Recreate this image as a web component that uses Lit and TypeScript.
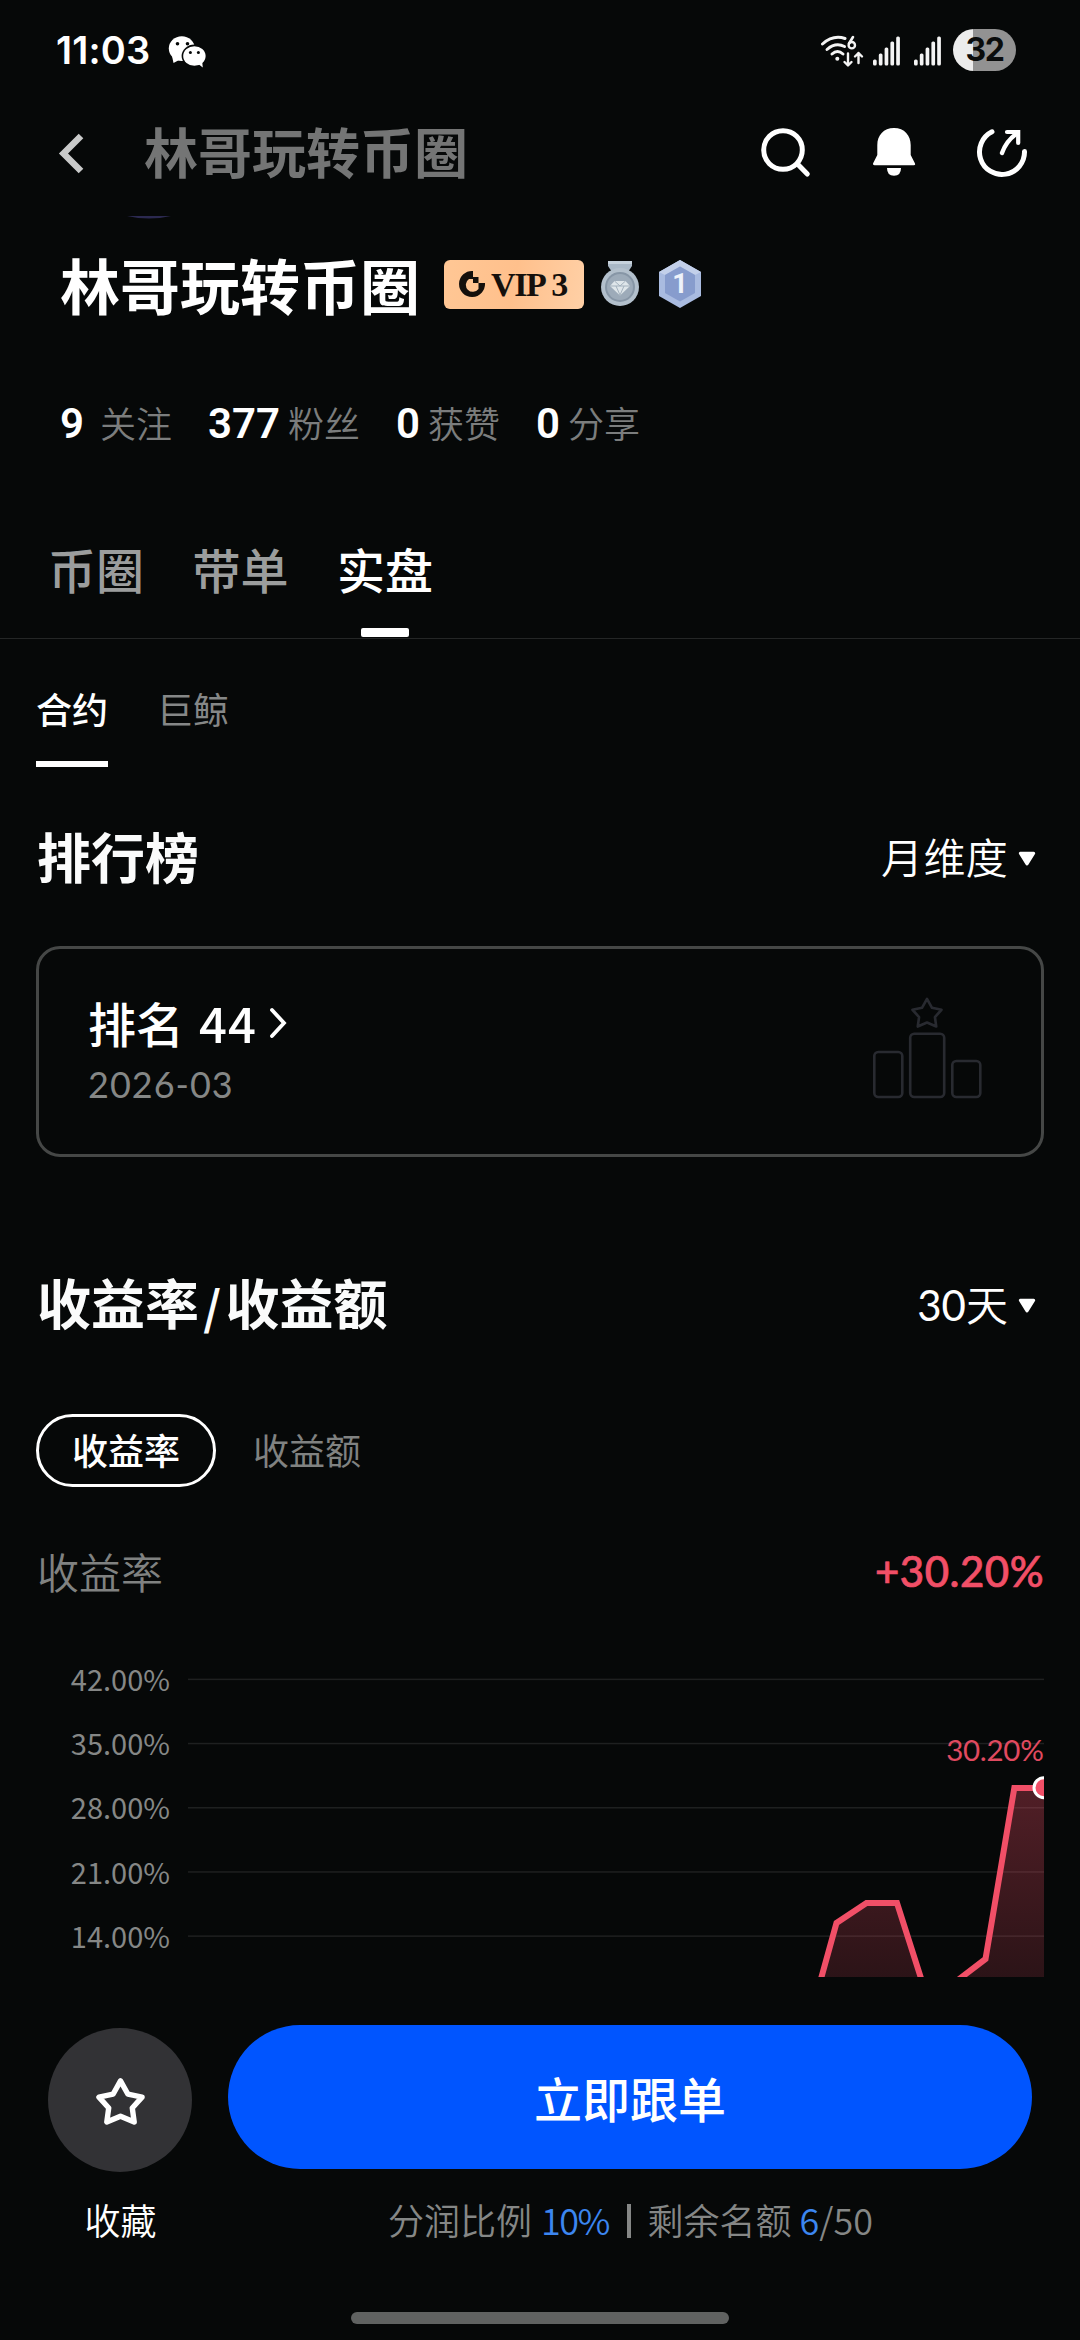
import { LitElement, html, svg, css } from "lit";
import { customElement } from "lit/decorators.js";

const starPath = "M25 5 L32.6 18.6 L47 21.6 L37 32.6 L39 47 L25 41 L11 47 L13 32.6 L3 21.6 L17.4 18.6 Z";

const signal = () => html`
  <svg class="signal" viewBox="0 0 28 30">
    ${[6, 12, 18, 24, 29].map(
      (h, i) => svg`<rect x=${i * 5.8} y=${29.5 - h} width="3.7" height=${h} rx="1.5" fill="#f4f4f4"></rect>`
    )}
  </svg>
`;

const caret = () => html`
  <svg class="caret" viewBox="0 0 18 16">
    <path d="M2.3 2.2 H15.7 L9 13 Z" fill="#fff" stroke="#fff" stroke-width="3" stroke-linejoin="round" />
  </svg>
`;

@customElement("status-bar")
class StatusBar extends LitElement {
  static styles = css`
    :host { display: flex; align-items: center; height: 100px; padding: 0 64px 0 56px; box-sizing: border-box; }
    .time { font: 600 38px/44px Inter, "Noto Sans CJK SC", sans-serif; color: #fff; letter-spacing: 0.2px; width: 112px; }
    .wechat { width: 38px; height: 34px; margin-top: 3px; }
    .right { margin-left: auto; display: flex; align-items: center; }
    .wifi { width: 44px; height: 34px; margin-right: 9px; margin-top: 3px; }
    .signal { width: 28px; height: 30px; margin-right: 13px; margin-top: 2px; }
    .battery {
      width: 63px; height: 42px; border-radius: 21px; margin-left: -2px;
      background: linear-gradient(90deg, #ececec 20px, #929292 20px);
      font: 700 32px/42px Inter, "Noto Sans CJK SC", sans-serif; color: #0a0c0c; text-align: center; letter-spacing: -1.5px;
    }
  `;
  render() {
    return html`
      <div class="time">11:03</div>
      <svg class="wechat" viewBox="168 35 38 34">
        <ellipse cx="181.8" cy="48.6" rx="13" ry="12.4" fill="#fff" />
        <path d="M172 56 L173.5 63 L181 59 Z" fill="#fff" />
        <ellipse cx="194.4" cy="56" rx="12.8" ry="11.4" fill="#060808" />
        <ellipse cx="194.4" cy="56" rx="11.2" ry="9.8" fill="#fff" />
        <path d="M197 63 L202.8 67.5 L202 60 Z" fill="#fff" />
        <circle cx="177.5" cy="43.8" r="1.8" fill="#060808" /><circle cx="187.5" cy="43.8" r="1.8" fill="#060808" />
        <circle cx="190.4" cy="52.4" r="1.5" fill="#060808" /><circle cx="198.4" cy="52.4" r="1.5" fill="#060808" />
      </svg>
      <div class="right">
        <svg class="wifi" viewBox="819 35 44 34" fill="none" stroke="#f4f4f4" stroke-linecap="round">
          <path d="M821.5 44 Q832 34.5 844 38.5" stroke-width="3" />
          <path d="M826 49.5 Q834.5 42 843.5 46.5" stroke-width="3" />
          <path d="M831 54 Q836.5 49 842 54" stroke-width="3" />
          <circle cx="836.3" cy="58.7" r="2" fill="#f4f4f4" stroke="none" />
          <circle cx="850.8" cy="45.2" r="3.2" stroke-width="2.4" />
          <path d="M852 37 L848 43.5" stroke-width="2.6" />
          <path d="M847 53.5 V65 M843.5 62 L847 65.5 L850.5 62" stroke-width="2.4" stroke-linejoin="round" />
          <path d="M857.5 63 V53 M854 56.5 L857.5 53 L861 56.5" stroke-width="2.4" stroke-linejoin="round" />
        </svg>
        ${signal()}${signal()}
        <div class="battery">32</div>
      </div>
    `;
  }
}

@customElement("nav-header")
class NavHeader extends LitElement {
  static styles = css`
    :host { display: flex; align-items: center; height: 104px; padding: 0 50px 0 56px; box-sizing: border-box; }
    .back { width: 30px; height: 44px; margin-top: 3px; }
    .title { margin: -2px 0 0 58px; font: 700 54px/60px "Noto Sans CJK SC", sans-serif; color: #747575; }
    .actions { margin-left: auto; display: flex; gap: 52px; }
    .icon { width: 56px; height: 56px; }
  `;
  render() {
    return html`
      <svg class="back" viewBox="56 132 30 44" fill="none" stroke="#c9caca" stroke-width="6.5">
        <path d="M81 136 L63.5 153.5 L81 171" />
      </svg>
      <div class="title">林哥玩转币圈</div>
      <div class="actions">
        <svg class="icon" viewBox="758 124 56 56" fill="none" stroke="#fff" stroke-width="5" stroke-linecap="round">
          <circle cx="783" cy="150" r="19.3" /><path d="M797.5 164 L807.3 174" />
        </svg>
        <svg class="icon" viewBox="866 124 56 56" fill="#fff">
          <path d="M894 128 C883.5 128 877.3 135.5 877.3 145 V155 L873 163.5 Q872.6 165.3 874.5 165.3 H914 Q915.8 165.3 915 163.5 L910.7 155 V145 C910.7 135.5 904.5 128 894 128 Z" />
          <path d="M887 168 H901 Q901 175.8 894 175.8 Q887 175.8 887 168 Z" />
        </svg>
        <svg class="icon" viewBox="974 124 56 56" fill="none" stroke="#fff" stroke-width="5" stroke-linecap="round" stroke-linejoin="round">
          <path d="M992 131.8 A22.5 22.5 0 1 0 1024.5 151.5" />
          <path d="M1002 153 Q1006 141.500 1016 134" stroke-width="4.4" />
          <path d="M1007 132 H1018.2 V143" stroke-width="4.2" stroke-linejoin="miter" />
        </svg>
      </div>
    `;
  }
}

@customElement("profile-summary")
class ProfileSummary extends LitElement {
  static styles = css`
    :host { display: flex; flex-direction: column; font-family: "Noto Sans CJK SC", sans-serif; }
    .sliver { width: 44px; height: 3px; margin: 12px 0 35px 127px; }
    .name-row { display: flex; align-items: center; height: 60px; padding-left: 60px; }
    .name { font-size: 60px; line-height: 60px; font-weight: 700; color: #fff; margin-top: -1px; }
    .vip {
      display: flex; align-items: center; box-sizing: border-box; width: 140px; height: 49px; margin-left: 24px; padding-left: 14px;
      border-radius: 6px; background: linear-gradient(100deg, #ffc795, #ffc08c 50%, #ffd0a6);
      font: 700 34px/49px "Liberation Serif", serif; color: #15100c; letter-spacing: -1.4px;
    }
    .mark { width: 28px; height: 28px; margin-right: 5px; }
    .level { margin-left: 6px; }
    .medal { width: 40px; height: 48px; margin-left: 16px; }
    .hex { width: 44px; height: 50px; margin-left: 18px; }
    .stats { display: flex; align-items: center; gap: 36px; height: 48px; margin-top: 84px; padding-left: 60px; }
    .stat { display: flex; align-items: center; gap: 8px; }
    .wide { gap: 16px; }
    .count { font: 600 42px/48px Roboto, sans-serif; color: #fff; margin-top: 4px; }
    .label { font-size: 36px; line-height: 48px; font-weight: 350; color: #7b7d7d; }
  `;
  render() {
    const stats: [string, string][] = [["9", "关注"], ["377", "粉丝"], ["0", "获赞"], ["0", "分享"]];
    return html`
      <svg class="sliver" viewBox="0 0 44 3"><path d="M0 0 H44 Q22 5 0 0 Z" fill="#2b2950" /></svg>
      <div class="name-row">
        <div class="name">林哥玩转币圈</div>
        <div class="vip">
          <svg class="mark" viewBox="0 0 28 28">
            <path d="M15 1 A13 13 0 1 0 27 13 H20.500 V19 A7 7 0 1 1 11 9 H15 Z" fill="#15100c" />
            <path d="M15 7 H20.500 V13 H15 Z" fill="#15100c" />
          </svg>
          VIP<span class="level">3</span>
        </div>
        <svg class="medal" viewBox="0 0 40 48">
          <path d="M8 1 H32 V6 L28 12 H12 L8 6 Z" fill="#a9b8c6" />
          <path d="M8 1 H32 V4 H8 Z" fill="#c6d2dc" />
          <circle cx="20" cy="27" r="19" fill="#b3c0cc" />
          <circle cx="20" cy="27" r="15" fill="#8796a6" />
          <circle cx="20" cy="27" r="13" fill="#9dabb9" />
          <path d="M14.500 21 H25.500 L30 26 L20 35.500 L10 26 Z" fill="#dfe6ea" />
          <path d="M10 26 H30 M14.500 21 L20 26 L25.500 21 M16 26 L20 35 L24 26" stroke="#a3b1bd" stroke-width="1" fill="none" />
        </svg>
        <svg class="hex" viewBox="0 0 44 50">
          <path d="M22 1 L43 13 V37 L22 49 L1 37 V13 Z" fill="#a9bbe0" />
          <path d="M22 1 L43 13 L37 16 L22 7.500 L7 16 L1 13 Z" fill="#c3d0ea" />
          <path d="M22 7.500 L37 16 V34 L22 42.500 L7 34 V16 Z" fill="#879ccd" />
          <text x="22" y="34" text-anchor="middle" font-family="Roboto, sans-serif" font-weight="700" font-size="27" fill="#eef2fa">1</text>
        </svg>
      </div>
      <div class="stats">
        ${stats.map(
          ([n, l], i) => html`<div class="stat ${i === 0 ? "wide" : ""}"><span class="count">${n}</span><span class="label">${l}</span></div>`
        )}
      </div>
    `;
  }
}

@customElement("profile-tabs")
class ProfileTabs extends LitElement {
  static styles = css`
    :host { display: block; font-family: "Noto Sans CJK SC", sans-serif; }
    .tabs { display: flex; gap: 48.5px; height: 98px; margin-top: 94px; padding-left: 48px; border-bottom: 1px solid #242626; }
    .tab { display: flex; flex-direction: column; align-items: center; justify-content: space-between; font-size: 48px; line-height: 56px; font-weight: 500; color: #9b9d9d; }
    .tab.on { color: #fff; }
    .dash { width: 48px; height: 9px; border-radius: 2px; background: #fff; margin-bottom: 1px; }
    .subtabs { display: flex; gap: 49px; margin-top: 51px; padding-left: 36px; height: 77px; }
    .sub { display: flex; flex-direction: column; justify-content: space-between; font-size: 36px; line-height: 37px; color: #858787; }
    .sub.on { color: #fff; font-weight: 500; }
    .line { height: 6.5px; background: #fff; }
  `;
  render() {
    return html`
      <div class="tabs">
        <div class="tab">币圈</div>
        <div class="tab">带单</div>
        <div class="tab on">实盘<div class="dash"></div></div>
      </div>
      <div class="subtabs">
        <div class="sub on">合约<div class="line"></div></div>
        <div class="sub">巨鲸</div>
      </div>
    `;
  }
}

@customElement("rank-section")
class RankSection extends LitElement {
  static styles = css`
    :host { display: block; padding: 0 36px; font-family: "Noto Sans CJK SC", sans-serif; }
    .head { display: flex; align-items: center; justify-content: space-between; height: 54px; margin-top: 61px; }
    .title { font-size: 54px; line-height: 54px; font-weight: 700; color: #fafbfb; margin: 2px 0 0 1px; }
    .select { display: flex; align-items: center; gap: 10px; font-size: 42px; line-height: 54px; font-weight: 350; letter-spacing: 0.3px; color: #fff; margin: 2px 8px 0 0; }
    .caret { width: 18px; height: 16px; margin-top: 5px; }
    .card { display: flex; align-items: center; justify-content: space-between; box-sizing: border-box; height: 211px; margin-top: 64px; padding: 0 59px 0 49px; border: 3px solid #454746; border-radius: 24px; }
    .rank { display: flex; align-items: center; font-size: 48px; line-height: 56px; font-weight: 500; color: #fff; margin-top: -4px; }
    .num { font-size: 49px; letter-spacing: 1px; margin-left: 15px; }
    .go { width: 20px; height: 34px; margin: 3px 0 0 11px; }
    .date { font: 400 36px/44px Lato, sans-serif; letter-spacing: 1px; color: #858786; margin-top: 12px; }
    .podium { width: 110px; height: 104px; margin-top: -7px; }
  `;
  render() {
    return html`
      <div class="head">
        <div class="title">排行榜</div>
        <div class="select">月维度${caret()}</div>
      </div>
      <div class="card">
        <div>
          <div class="rank">排名<span class="num">44</span>
            <svg class="go" viewBox="0 0 20 34"><path d="M4 4 L16 17 L4 30" fill="none" stroke="#fff" stroke-width="3.8" stroke-linecap="round" /></svg>
          </div>
          <div class="date">2026-03</div>
        </div>
        <svg class="podium" viewBox="872 997 110 104" fill="none" stroke="#282a30" stroke-width="2.6" stroke-linejoin="round">
          <rect x="874.3" y="1053" width="28" height="45" rx="4" />
          <rect x="910.2" y="1034.7" width="34" height="63.300" rx="4" />
          <rect x="952.3" y="1062" width="28" height="36" rx="4" />
          <g transform="translate(910.500 996.500) scale(.66)"><path d=${starPath} stroke-width="4" /></g>
        </svg>
      </div>
    `;
  }
}

@customElement("yield-section")
class YieldSection extends LitElement {
  static styles = css`
    :host { display: block; padding: 0 36px; font-family: "Noto Sans CJK SC", sans-serif; }
    .head { display: flex; align-items: center; justify-content: space-between; height: 54px; margin-top: 118px; }
    .title { font-size: 54px; line-height: 54px; font-weight: 700; color: #fafbfb; margin: 2px 0 0 1px; }
    .slash { display: inline-block; width: 26.4px; text-align: center; font-size: 46px; }
    .select { display: flex; align-items: center; font-size: 42px; line-height: 54px; font-weight: 350; color: #fff; margin: 2px 8px 0 0; }
    .days { font-family: Lato, sans-serif; font-weight: 400; margin-top: 4px; }
    .caret { width: 18px; height: 16px; margin: 5px 0 0 10px; }
    .pills { display: flex; align-items: center; gap: 36px; margin-top: 85px; height: 73px; }
    .pill { box-sizing: border-box; width: 180px; height: 73px; border: 3px solid #fff; border-radius: 37px; font-size: 36px; line-height: 64px; font-weight: 500; color: #fff; text-align: center; }
    .plain { font-size: 36px; line-height: 70px; color: #808281; margin-top: -3px; margin-left: 1px; }
    .metric { display: flex; align-items: center; justify-content: space-between; height: 48px; margin-top: 60px; }
    .name { font-size: 42px; line-height: 48px; font-weight: 350; color: #808281; margin-left: 1px; }
    .value { font: 500 42px/48px Lato, sans-serif; letter-spacing: 0.5px; color: #f14f67; -webkit-text-stroke: 0.7px #f14f67; }
    .chart { display: flex; justify-content: space-between; height: 318px; margin-top: 64px; }
    .axis { display: flex; flex-direction: column; width: 134px; margin-top: -3px; text-align: right; }
    .tick { font-size: 29px; line-height: 44px; margin-bottom: 20.2px; color: #858786; }
    .plot { width: 856px; height: 318px; }
  `;
  render() {
    const ticks = ["42.00%", "35.00%", "28.00%", "21.00%", "14.00%"];
    const left = "806.5,2031 836.5,1923 866.5,1903 897,1903 927,1997";
    const right = "956,1981.5 985.5,1959 1014.3,1788 1044,1788";
    return html`
      <div class="head">
        <div class="title">收益率<span class="slash">/</span>收益额</div>
        <div class="select"><span class="days">30</span>天${caret()}</div>
      </div>
      <div class="pills"><div class="pill">收益率</div><div class="plain">收益额</div></div>
      <div class="metric"><div class="name">收益率</div><div class="value">+30.20%</div></div>
      <div class="chart">
        <div class="axis">${ticks.map((t) => html`<div class="tick">${t}</div>`)}</div>
        <svg class="plot" viewBox="188 1659 856 318">
          <defs>
            <linearGradient id="area" gradientUnits="userSpaceOnUse" x1="0" y1="1788" x2="0" y2="1977">
              <stop offset="0" stop-color="#f14f67" stop-opacity=".32" />
              <stop offset="1" stop-color="#f14f67" stop-opacity=".16" />
            </linearGradient>
          </defs>
          ${ticks.map((_, i) => svg`<rect x="188" y=${1678.6 + i * 64.2} width="856" height="1.5" fill="#1e2020"></rect>`)}
          <polygon points="${left} 927,2040 806.5,2040" fill="url(#area)" />
          <polygon points="${right} 1044,2040 956,2040" fill="url(#area)" />
          <polyline points=${left} fill="none" stroke="#f14f67" stroke-width="6" />
          <polyline points=${right} fill="none" stroke="#f14f67" stroke-width="6" />
          <circle cx="1044" cy="1787.7" r="10" fill="#f14f67" stroke="#fff" stroke-width="3" />
          <text x="1043.5" y="1760.5" text-anchor="end" font-family="Lato, sans-serif" font-size="29.500" letter-spacing="-.3" fill="#e04a60">30.20%</text>
        </svg>
      </div>
    `;
  }
}

@customElement("follow-footer")
class FollowFooter extends LitElement {
  static styles = css`
    :host { display: flex; flex-direction: column; height: 363px; font-family: "Noto Sans CJK SC", sans-serif; }
    .row { display: flex; padding: 48px 48px 0; gap: 36px; }
    .fav { display: flex; flex-direction: column; align-items: center; width: 144px; padding-top: 3px; }
    .disc { display: flex; align-items: center; justify-content: center; width: 144px; height: 144px; border-radius: 72px; background: #323235; }
    .star { width: 49px; height: 49px; }
    .cap { font-size: 36px; line-height: 44px; font-weight: 350; color: #fff; margin: 25px 0 0 1px; }
    .main { flex: 1; display: flex; flex-direction: column; align-items: center; }
    .cta { align-self: stretch; height: 144px; border-radius: 72px; background: #0055ff; color: #fff; text-align: center; font-size: 48px; line-height: 144px; font-weight: 500; }
    .note { display: flex; white-space: pre; font-size: 36px; line-height: 44px; font-weight: 350; color: #858786; margin: 28px 0 0 1px; }
    .blue { color: #3c86f0; }
    .pct { letter-spacing: -1.5px; margin: 0 18px 0 9px; }
    .bar { width: 3.5px; height: 34px; background: #858786; margin: 7px 17px 0 0; }
    .left { margin-left: 8px; }
    .home { width: 378px; height: 12px; border-radius: 6px; background: #606261; margin: auto auto 16px; }
  `;
  render() {
    return html`
      <div class="row">
        <div class="fav">
          <div class="disc">
            <svg class="star" viewBox="0 0 50 50"><path d=${starPath} fill="none" stroke="#fff" stroke-width="5.5" stroke-linejoin="round" /></svg>
          </div>
          <div class="cap">收藏</div>
        </div>
        <div class="main">
          <div class="cta">立即跟单</div>
          <div class="note">分润比例<span class="blue pct">10%</span><span class="bar"></span>剩余名额<span class="blue left">6</span>/50</div>
        </div>
      </div>
      <div class="home"></div>
    `;
  }
}

@customElement("app-root")
class AppRoot extends LitElement {
  static styles = css`
    :host { display: block; width: 1080px; height: 2340px; overflow: hidden; background: #060808; }
    .page { display: flex; flex-direction: column; width: 1080px; height: 2340px; }
  `;
  render() {
    return html`
      <div class="page">
        <status-bar></status-bar>
        <nav-header></nav-header>
        <profile-summary></profile-summary>
        <profile-tabs></profile-tabs>
        <rank-section></rank-section>
        <yield-section></yield-section>
        <follow-footer></follow-footer>
      </div>
    `;
  }
}
